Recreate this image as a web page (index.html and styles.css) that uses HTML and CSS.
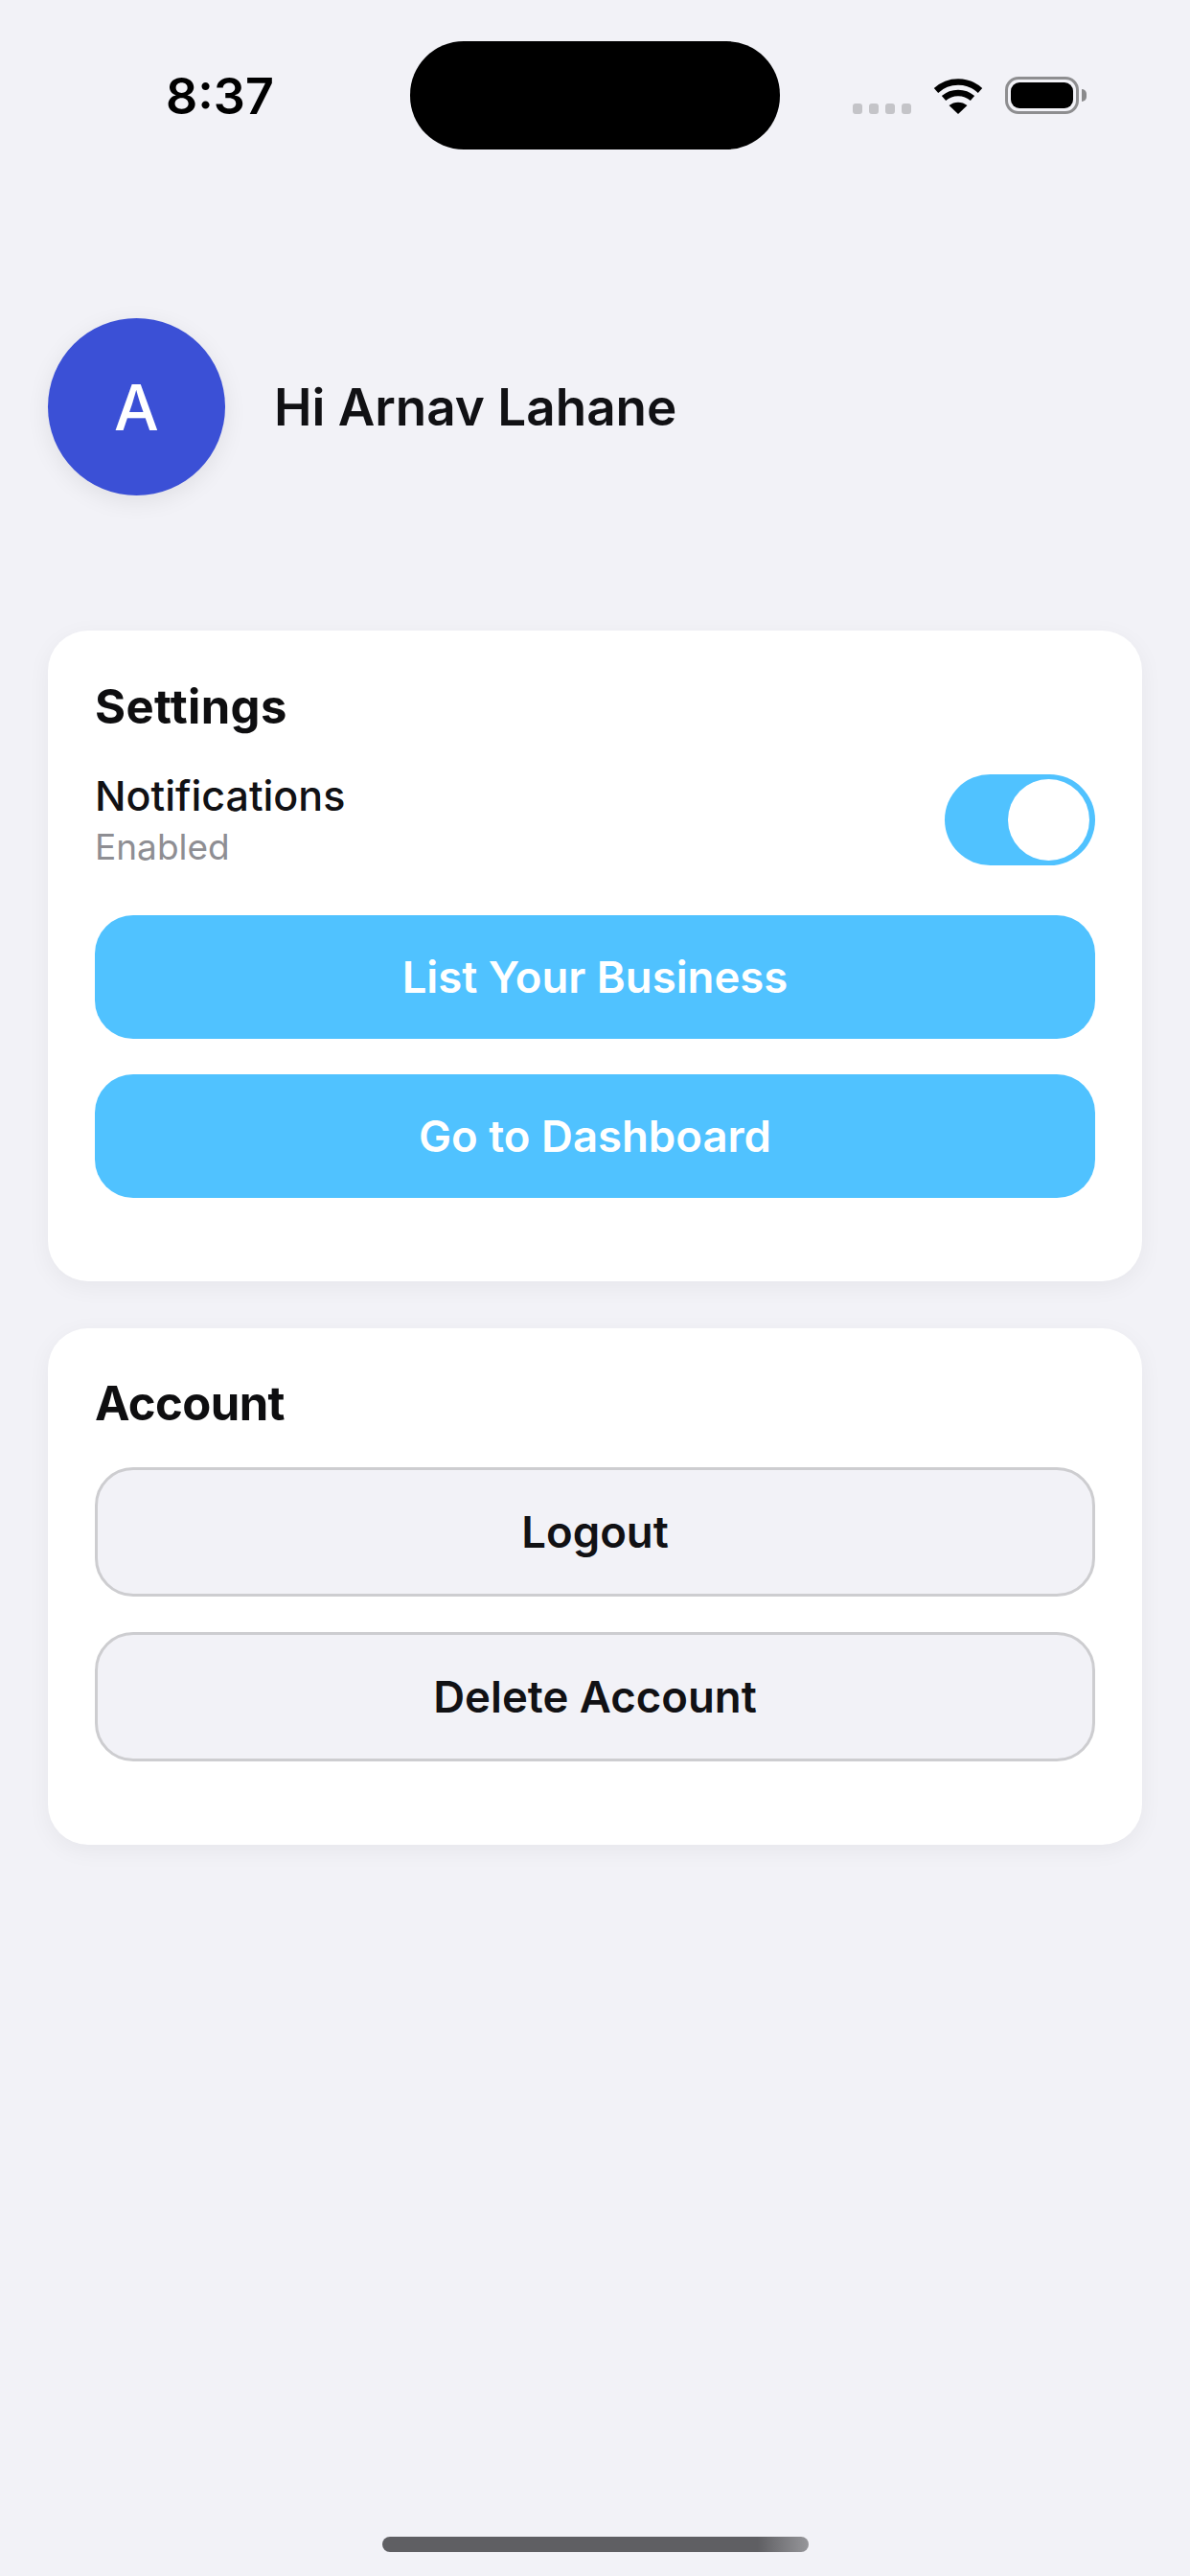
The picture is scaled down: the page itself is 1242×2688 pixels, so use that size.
FILE: index.html
```html
<!DOCTYPE html>
<html lang="en">
<head>
<meta charset="utf-8">
<title>Settings</title>
<link rel="stylesheet" href="styles.css">
</head>
<body>
<div class="screen">
  <header class="status-bar">
    <div class="status-time">8:37</div>
    <div class="island"></div>
    <div class="status-icons">
      <div class="signal"><span></span><span></span><span></span><span></span></div>
      <svg class="wifi" width="52" height="38" viewBox="0 0 52 38" aria-hidden="true">
        <path d="M3 13.5C16 1.5 36 1.5 49 13.5" class="wifi-arc"/>
        <path d="M11 21.5C19.5 14 32.5 14 41 21.5" class="wifi-arc"/>
        <path d="M16.5 29C22 24.5 30 24.5 35.500 29L26 38Z" class="wifi-fill"/>
      </svg>
      <div class="battery"><div class="battery-level"></div></div>
      <div class="battery-cap"></div>
    </div>
  </header>

  <section class="profile">
    <div class="avatar">A</div>
    <div class="greeting">Hi Arnav Lahane</div>
  </section>

  <section class="card card-settings">
    <h2 class="card-title">Settings</h2>
    <div class="setting-row">
      <div class="setting-text">
        <div class="setting-name">Notifications</div>
        <div class="setting-state">Enabled</div>
      </div>
      <div class="toggle"><div class="toggle-knob"></div></div>
    </div>
    <div class="btn btn-primary">List Your Business</div>
    <div class="btn btn-primary">Go to Dashboard</div>
  </section>

  <section class="card card-account">
    <h2 class="card-title">Account</h2>
    <div class="btn btn-outline">Logout</div>
    <div class="btn btn-outline">Delete Account</div>
  </section>

  <div class="home-bar"></div>
</div>
</body>
</html>
```

FILE: styles.css
```css
* { box-sizing: border-box; }
html, body { margin: 0; padding: 0; }
body {
  background: #f2f2f7;
  font-family: Inter, "Liberation Sans", sans-serif;
  color: #111114;
}
.screen {
  width: 1242px;
  height: 2688px;
  display: flex;
  flex-direction: column;
  overflow: hidden;
  background: #f2f2f7;
}

/* status bar */
.status-bar {
  display: grid;
  grid-template-columns: 428px 386px 1fr;
  padding-top: 43px;
  height: 156px;
  flex: none;
}
.status-time {
  padding: 27px 0 0 173px;
  font-size: 52px;
  line-height: 62px;
  font-weight: 600;
  color: #000;
  white-space: nowrap;
}
.island {
  height: 113px;
  border-radius: 56px;
  background: #000;
}
.status-icons {
  display: flex;
  align-items: flex-start;
  padding: 37px 0 0 76px;
}
.signal {
  display: flex;
  gap: 7px;
  margin-top: 28px;
  margin-right: 23px;
}
.signal span {
  width: 10px;
  height: 11px;
  border-radius: 3px;
  background: #c4c4c8;
}
.wifi { flex: none; margin-top: 1px; margin-right: 23px; }
.wifi-arc { fill: none; stroke: #000; stroke-width: 6.500; }
.wifi-fill { fill: #000; }
.battery {
  width: 77px;
  height: 39px;
  padding: 3px;
  border: 3px solid #8e8e90;
  border-radius: 14px;
  background: #f2f2f7;
}
.battery-level {
  width: 100%;
  height: 100%;
  border-radius: 9px;
  background: #000;
}
.battery-cap {
  width: 5px;
  height: 13px;
  margin: 13px 0 0 3px;
  border-radius: 0 5px 5px 0;
  background: #8a8a8c;
}

/* profile */
.profile {
  display: flex;
  align-items: center;
  gap: 51px;
  margin: 176px 0 0 50px;
  flex: none;
}
.avatar {
  width: 185px;
  height: 185px;
  border-radius: 50%;
  background: #3b50d6;
  color: #fff;
  font-size: 66px;
  font-weight: 500;
  display: flex;
  align-items: center;
  justify-content: center;
  box-shadow: 0 6px 24px rgba(0, 0, 0, 0.08);
}
.greeting {
  font-size: 53px;
  font-weight: 600;
  line-height: 62px;
  white-space: nowrap;
}

/* cards */
.card {
  margin: 0 50px;
  padding: 0 49px;
  border-radius: 42px;
  background: #fff;
  box-shadow: 0 6px 24px rgba(0, 0, 0, 0.05);
  display: flex;
  flex-direction: column;
  flex: none;
}
.card-settings { margin-top: 141px; height: 679px; padding-top: 50px; }
.card-account { margin-top: 49px; height: 539px; padding-top: 49px; }
.card-title {
  margin: 0;
  font-size: 49px;
  line-height: 60px;
  font-weight: 700;
  color: #0e0e10;
}
.card-settings .card-title { letter-spacing: 0.4px; }
.card-account .card-title { letter-spacing: -0.6px; }
.setting-row {
  display: flex;
  align-items: center;
  justify-content: space-between;
  margin-top: 37px;
  height: 100px;
}
.setting-name { font-size: 43px; line-height: 50px; font-weight: 500; }
.setting-state { font-size: 37px; line-height: 44px; margin-top: 7px; color: #8e8e93; }
.toggle {
  width: 157px;
  height: 95px;
  border-radius: 48px;
  background: #50c2ff;
  padding: 5px 6px;
  display: flex;
  justify-content: flex-end;
}
.toggle-knob {
  width: 85px;
  height: 85px;
  border-radius: 50%;
  background: #fff;
}
.btn {
  display: flex;
  align-items: center;
  justify-content: center;
  font-size: 45.500px;
  font-weight: 600;
  border-radius: 40px;
  white-space: nowrap;
}
.btn-primary {
  height: 129px;
  background: #50c2ff;
  color: #fff;
}
.setting-row + .btn-primary { margin-top: 50px; }
.btn-primary + .btn-primary { margin-top: 37px; }
.btn-outline {
  height: 135px;
  background: #f2f2f7;
  border: 3px solid #cdcdd0;
  color: #111114;
}
.card-title + .btn-outline { margin-top: 36px; }
.btn-outline + .btn-outline { margin-top: 37px; }

/* home indicator */
.home-bar {
  width: 445px;
  height: 16px;
  margin: auto auto 25px;
  border-radius: 8px;
  background: linear-gradient(90deg, #5f5f63 0%, #5f5f63 88%, #96969a 100%);
}
```
